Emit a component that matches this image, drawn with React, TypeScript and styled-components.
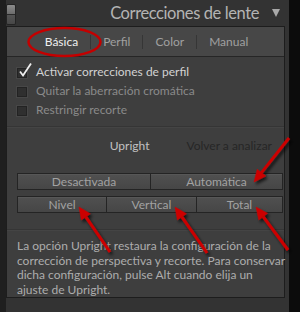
import React from 'react';
import styled, { createGlobalStyle } from 'styled-components';

const GlobalStyle = createGlobalStyle`
  html, body {
    margin: 0;
    padding: 0;
    background: #0c0c0c;
  }
  body {
    font-family: Lato, "Open Sans", sans-serif;
    -webkit-font-smoothing: antialiased;
  }
`;

const Screen = styled.div`
  position: relative;
  display: flex;
  width: 300px;
  height: 312px;
  overflow: hidden;
  background: #0c0c0c;
`;

const LeftEdge = styled.div`
  width: 6px;
  background: #1f1f1f;
`;

const Column = styled.div`
  width: 283px;
  display: flex;
  flex-direction: column;
  background: #333333;
`;

const Header = styled.div`
  height: 26px;
  display: flex;
  align-items: center;
  padding: 0 9px 0 1px;
`;

const SoloSwitch = styled.div`
  align-self: flex-start;
  margin-top: 5px;
  width: 8px;
  height: 19px;
  border-radius: 1px;
  background: linear-gradient(#8c8c8c, #6c6c6c 47%, #2a2a2a 50%, #545454 54%, #474747);
  box-shadow: 0 0 0 1px #242424;
`;

const Title = styled.div`
  margin-left: auto;
  font-size: 16.5px;
  letter-spacing: -0.4px;
  color: #b4b4b4;
`;

const Triangle = styled.span`
  margin-left: 13px;
  width: 0;
  height: 0;
  border-left: 4.5px solid transparent;
  border-right: 4.5px solid transparent;
  border-top: 8px solid #a9a9a9;
`;

const Card = styled.div`
  box-sizing: border-box;
  height: 272px;
  margin-right: 4px;
  border: 1px solid #1d1d1d;
  background: #3e3e3e;
  display: flex;
  flex-direction: column;
`;

const Tabs = styled.div`
  height: 30px;
  display: flex;
  align-items: center;
  justify-content: center;
  gap: 12px;
  padding-left: 2px;
  background: #474747;
  border-bottom: 1px solid #262626;
`;

const Tab = styled.span<{ $active?: boolean }>`
  font-size: 12px;
  color: ${(p) => (p.$active ? '#f0f0f0' : '#a0a0a0')};
`;

const TabSep = styled.span`
  width: 1px;
  height: 14px;
  background: #363636;
`;

const Checks = styled.div`
  padding: 5px 0 0 10px;
  display: flex;
  flex-direction: column;
`;

const CheckRow = styled.div<{ $on?: boolean }>`
  height: 19px;
  display: flex;
  align-items: center;
  gap: 9px;
  font-size: 12px;
  color: ${(p) => (p.$on ? '#d2d2d2' : '#8a8a8a')};
`;

const Box = styled.span`
  position: relative;
  box-sizing: border-box;
  width: 10px;
  height: 10px;
  margin-top: 2px;
  background: #2f2f2f;
  border: 1px solid #232323;
  box-shadow: 0 0 0 1px #474747;

  svg {
    position: absolute;
    left: 0;
    top: -6px;
    overflow: visible;
  }
`;

const Divider = styled.div<{ $top: number }>`
  margin-top: ${(p) => p.$top}px;
  height: 1px;
  background: #353535;
  border-bottom: 1px solid #444444;
`;

const UprightRow = styled.div`
  margin-top: 7px;
  height: 20px;
  display: flex;
  align-items: center;
  justify-content: flex-end;
  gap: 37px;
  padding-right: 12px;
  font-size: 12px;
`;

const UprightLabel = styled.span`
  color: #c2c2c2;
`;

const Reanalyze = styled.span`
  color: #262626;
`;

const Buttons = styled.div`
  margin: 18px 1px 0 10px;
  display: flex;
  flex-direction: column;
  gap: 6px;
`;

const ButtonRow = styled.div<{ $cols: string }>`
  display: grid;
  grid-template-columns: ${(p) => p.$cols};
  height: 17px;
  box-sizing: border-box;
  border: 1px solid #242424;
`;

const Button = styled.div`
  display: flex;
  align-items: center;
  justify-content: center;
  font-size: 12px;
  color: #a2a2a2;
  background: linear-gradient(#505050, #464646);
  box-shadow: inset 0 1px 0 #575757;

  & + & {
    border-left: 1px solid #242424;
  }
`;

const Note = styled.p`
  margin: 8px 0 0;
  padding: 0 10px;
  font-size: 12px;
  line-height: 14.5px;
  color: #adadad;
  white-space: nowrap;
`;

const Marks = styled.svg`
  position: absolute;
  left: 0;
  top: 0;
  pointer-events: none;
`;

type Arrow = { from: [number, number]; to: [number, number] };

const arrows: Arrow[] = [
  { from: [289, 138], to: [254, 182] },
  { from: [110, 252], to: [79, 207] },
  { from: [207, 253], to: [175, 207] },
  { from: [288, 250], to: [256, 207] },
];

function head(a: Arrow, len = 12, half = 5.5) {
  const [fx, fy] = a.from;
  const [tx, ty] = a.to;
  const d = Math.hypot(tx - fx, ty - fy);
  const ux = (tx - fx) / d;
  const uy = (ty - fy) / d;
  const bx = tx - ux * len;
  const by = ty - uy * len;
  return {
    base: [bx, by],
    points: `${tx},${ty} ${bx - uy * half},${by + ux * half} ${bx + uy * half},${by - ux * half}`,
  };
}

function Annotations() {
  return (
    <Marks width={300} height={312} viewBox="0 0 300 312">
      <defs>
        <filter id="shade" x="-30%" y="-30%" width="160%" height="160%">
          <feDropShadow dx="2" dy="2.5" stdDeviation="1.8" floodColor="#000" floodOpacity="0.7" />
        </filter>
      </defs>
      <ellipse cx="64.5" cy="42" rx="36" ry="14" fill="none" stroke="#c40000" strokeWidth="2.5" />
      <g filter="url(#shade)" fill="#cc0000" stroke="#cc0000">
        {arrows.map((a, i) => {
          const h = head(a);
          return (
            <g key={i}>
              <line x1={a.from[0]} y1={a.from[1]} x2={h.base[0]} y2={h.base[1]} strokeWidth="3" />
              <polygon points={h.points} strokeWidth="0.5" />
            </g>
          );
        })}
      </g>
    </Marks>
  );
}

function Check() {
  return (
    <svg width="16" height="16" viewBox="0 0 16 16">
      <path d="M2 8.5 L5 12.5 L13 0.5" fill="none" stroke="#eeeeee" strokeWidth="1.8" />
    </svg>
  );
}

export default function App() {
  const checks = [
    { label: 'Activar correcciones de perfil', on: true },
    { label: 'Quitar la aberración cromática', on: false },
    { label: 'Restringir recorte', on: false },
  ];

  return (
    <Screen>
      <GlobalStyle />
      <LeftEdge />
      <Column>
        <Header>
          <SoloSwitch />
          <Title>Correcciones de lente</Title>
          <Triangle />
        </Header>
        <Card>
          <Tabs>
            <Tab $active>Básica</Tab>
            <TabSep />
            <Tab>Perfil</Tab>
            <TabSep />
            <Tab>Color</Tab>
            <TabSep />
            <Tab>Manual</Tab>
          </Tabs>
          <Checks>
            {checks.map((c) => (
              <CheckRow key={c.label} $on={c.on}>
                <Box>{c.on && <Check />}</Box>
                {c.label}
              </CheckRow>
            ))}
          </Checks>
          <Divider $top={7} />
          <UprightRow>
            <UprightLabel>Upright</UprightLabel>
            <Reanalyze>Volver a analizar</Reanalyze>
          </UprightRow>
          <Buttons>
            <ButtonRow $cols="132px 1fr">
              <Button>Desactivada</Button>
              <Button>Automática</Button>
            </ButtonRow>
            <ButtonRow $cols="88px 90px 1fr">
              <Button>Nivel</Button>
              <Button>Vertical</Button>
              <Button>Total</Button>
            </ButtonRow>
          </Buttons>
          <Divider $top={16} />
          <Note>
            La opción Upright restaura la configuración de la
            <br />
            corrección de perspectiva y recorte. Para conservar
            <br />
            dicha configuración, pulse Alt cuando elija un
            <br />
            ajuste de Upright.
          </Note>
        </Card>
      </Column>
      <Annotations />
    </Screen>
  );
}
